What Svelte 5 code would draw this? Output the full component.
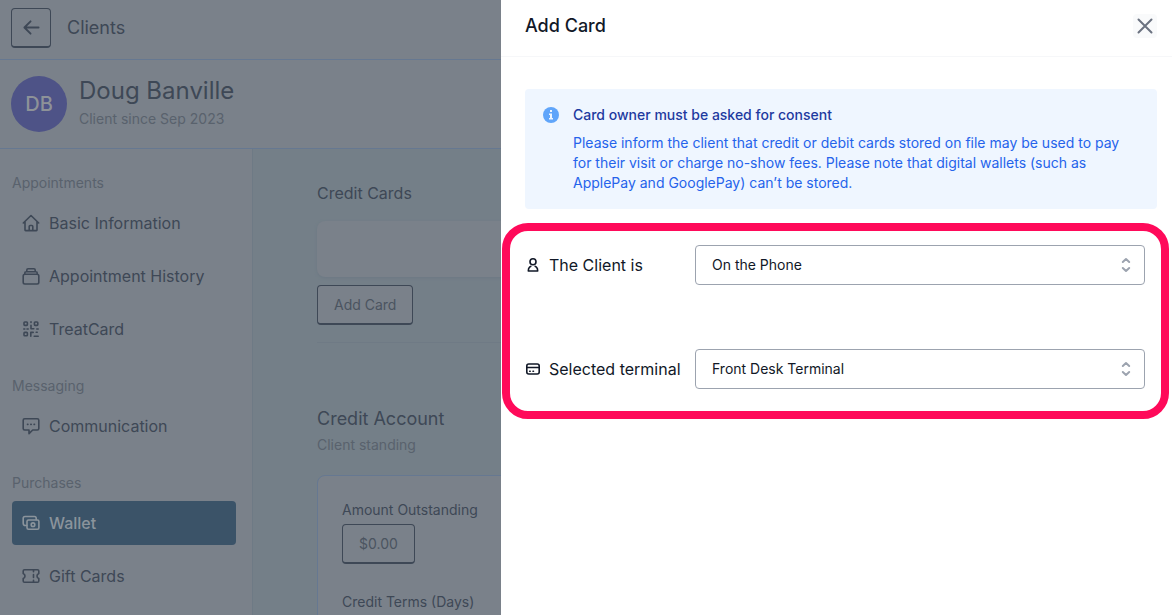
<script>
  const groups = [
    {
      title: 'Appointments',
      items: [
        { label: 'Basic Information', icon: 'home' },
        { label: 'Appointment History', icon: 'stack' },
        { label: 'TreatCard', icon: 'qr' },
      ],
    },
    { title: 'Messaging', items: [{ label: 'Communication', icon: 'message' }] },
    {
      title: 'Purchases',
      items: [
        { label: 'Wallet', icon: 'cash', active: true },
        { label: 'Gift Cards', icon: 'ticket' },
      ],
    },
  ];
  let place = $state('On the Phone');
  let terminal = $state('Front Desk Terminal');
</script>

{#snippet chevrons()}
  <svg class="chevrons" viewBox="0 0 20 20" aria-hidden="true">
    <path d="M6.800 7 10 4l3.200 3M6.800 13 10 16l3.200-3" />
  </svg>
{/snippet}

{#snippet icon(name)}
  <svg class="icon" viewBox="0 0 18 18" aria-hidden="true">
    {#if name === 'home'}
      <path d="M1.300 9 9 1.500 16.700 9M3 7.600V16q0 .6.600.6h10.800q.6 0 .6-.6V7.600M7.200 16.400v-4q0-.9.900-.9h1.800q.9 0 .9.900v4" />
    {:else if name === 'stack'}
      <rect x="1.200" y="7.200" width="15.600" height="9.800" rx="1.700" />
      <path d="M2.800 7V5.900q0-1.200 1.200-1.200h10q1.200 0 1.200 1.200V7M4.800 4.600V3q0-1.300 1.300-1.300h5.800q1.300 0 1.300 1.300v1.600" />
    {:else if name === 'qr'}
      <rect x="2" y="2" width="3.400" height="3.400" rx=".8" />
      <rect x="12.400" y="2" width="3.400" height="3.400" rx=".8" />
      <rect x="2" y="12.400" width="3.400" height="3.400" rx=".8" />
      <path d="M9 1.800v.6M9 5.200v3.600h2.800M1.800 9h1M5 9h1.200M14.800 9h1.400M8.800 16.200v-3.800h2.400M14.200 12.200h1M12.200 16.200h4" />
    {:else if name === 'message'}
      <path d="M2.700 1.700h12.600q1.500 0 1.500 1.500v8.300q0 1.500-1.500 1.500h-4.600L7 16.600V13H2.700q-1.500 0-1.500-1.500V3.200q0-1.500 1.500-1.500Z" />
      <path d="M5.500 7.400h.4M8.800 7.400h.4M12.100 7.400h.4" />
    {:else if name === 'cash'}
      <rect x="5" y="6" width="11.900" height="9.300" rx="1.500" />
      <circle cx="11" cy="10.700" r="1.800" />
      <path d="M4.800 11.500H3.500q-2.300 0-2.300-2.300V4.300q0-1.800 1.800-1.800h9.500q1.700 0 1.700 1.700v1.500" />
    {:else}
      <path d="M2.500 2.800h13q1.300 0 1.300 1.300v2.300q-1.800.7-1.800 2.600t1.800 2.600v2.300q0 1.300-1.300 1.300h-13q-1.300 0-1.300-1.300v-2.300Q3 10.900 3 9T1.200 6.400V4.100q0-1.300 1.300-1.300Z" />
      <path d="M11.500 3v1.700M11.500 7.600v2.800M11.500 13.300V15" />
    {/if}
  </svg>
{/snippet}

<div class="page">
  <header class="topbar">
    <button class="btn back" aria-label="Back">
      <svg viewBox="0 0 18 18" aria-hidden="true"><path d="M16.500 9H2M8 2.500 1.500 9 8 15.500" /></svg>
    </button>
    <span>Clients</span>
  </header>

  <section class="client">
    <div class="avatar">DB</div>
    <div class="who">
      <h1>Doug Banville</h1>
      <p>Client since Sep 2023</p>
    </div>
  </section>

  <div class="columns">
    <nav>
      {#each groups as group}
        <section class="group">
          <h2>{group.title}</h2>
          <ul>
            {#each group.items as item}
              <li>
                <a href="#{item.icon}" class:active={item.active}>
                  {@render icon(item.icon)}
                  {item.label}
                </a>
              </li>
            {/each}
          </ul>
        </section>
      {/each}
    </nav>

    <main>
      <h3>Credit Cards</h3>
      <div class="empty"></div>
      <button class="btn">Add Card</button>
      <hr />
      <h2>Credit Account</h2>
      <p class="hint">Client standing</p>
      <div class="account">
        <p>Amount Outstanding</p>
        <button class="btn">$0.00</button>
        <p class="terms">Credit Terms (Days)</p>
      </div>
    </main>
  </div>
</div>

<aside class="drawer" role="dialog" aria-labelledby="drawer-title">
  <header>
    <h2 id="drawer-title">Add Card</h2>
    <button class="close" aria-label="Close">
      <svg viewBox="0 0 24 24" aria-hidden="true"><path d="M5.500 5.500 18.500 18.500M18.500 5.500 5.500 18.500" /></svg>
    </button>
  </header>

  <div class="notice">
    <svg viewBox="0 0 20 20" aria-hidden="true">
      <circle cx="10" cy="10" r="8" fill="#60a5fa" />
      <path d="M9 5h2v2H9zM8 8.500h3V13h1v1.500H8V13h1v-3H8z" fill="#eff6ff" />
    </svg>
    <div>
      <h3>Card owner must be asked for consent</h3>
      <p>
        Please inform the client that credit or debit cards stored on file may be used to pay for
        their visit or charge no-show fees. Please note that digital wallets (such as ApplePay and
        GooglePay) can’t be stored.
      </p>
    </div>
  </div>

  <form>
    <div class="field">
      <label for="place">
        <svg viewBox="0 0 14 16" aria-hidden="true">
          <circle cx="7" cy="4.700" r="3" />
          <path d="M4.800 9.300 3.600 10.200Q2.300 11.300 2.300 14h9.400q0-2.700-1.300-3.800L9.200 9.300" />
        </svg>
        The Client is
      </label>
      <div class="select">
        <select id="place" bind:value={place}>
          <option>On the Phone</option>
        </select>
        {@render chevrons()}
      </div>
    </div>
    <div class="field">
      <label for="terminal">
        <svg viewBox="0 0 14 16" aria-hidden="true">
          <rect x=".8" y="3" width="12.400" height="10" rx="2" />
          <path d="M1 6.500h12M3.700 10.300h.5M7 10.300h.5" />
        </svg>
        Selected terminal
      </label>
      <div class="select">
        <select id="terminal" bind:value={terminal}>
          <option>Front Desk Terminal</option>
        </select>
        {@render chevrons()}
      </div>
    </div>
  </form>
</aside>

<style>
  :global(body) {
    margin: 0;
    overflow: hidden;
    font-family: Inter, 'Liberation Sans', sans-serif;
    font-size: 14px;
    line-height: 20px;
  }
  * {
    box-sizing: border-box;
  }
  h1, h2, h3, p, ul {
    margin: 0;
    padding: 0;
    font-weight: 400;
  }
  ul {
    list-style: none;
  }
  svg {
    flex: none;
    fill: none;
    stroke: currentColor;
    stroke-width: 1.600;
    stroke-linecap: round;
    stroke-linejoin: round;
  }
  button, select {
    font: inherit;
    color: inherit;
  }

  .page {
    display: flex;
    flex-direction: column;
    height: 100vh;
    overflow: hidden;
    background: #7a818a;
    color: #3e4856;
  }
  .topbar {
    flex: none;
    display: flex;
    align-items: center;
    gap: 16px;
    height: 60px;
    padding: 0 11px 4px;
    border-bottom: 1px solid #667891;
    font-size: 18px;
    line-height: 28px;
  }
  .btn {
    height: 40px;
    padding: 0 16px;
    border: 1px solid #3e4856;
    border-bottom-width: 2px;
    border-radius: 4px;
    background: #7a818a;
    color: #4b5460;
  }
  .back {
    display: grid;
    place-items: center;
    width: 40px;
    padding: 0;
    color: #3e4856;
  }
  .back svg {
    width: 17px;
    height: 17px;
    stroke-width: 2;
  }
  .client {
    flex: none;
    display: flex;
    align-items: center;
    gap: 12px;
    height: 89px;
    padding: 0 11px;
    border-bottom: 1px solid #667891;
  }
  .avatar {
    display: grid;
    place-items: center;
    width: 56px;
    height: 56px;
    border-radius: 50%;
    background: #4e5387;
    color: #8d9298;
    font-size: 20px;
    font-weight: 500;
  }
  .who {
    padding-bottom: 4px;
  }
  h1 {
    font-size: 24px;
    line-height: 32px;
    margin-bottom: 2px;
  }
  .client p, .group h2, .hint {
    color: #59626d;
    font-size: 14px;
  }
  .columns {
    flex: 1;
    display: flex;
    min-height: 0;
  }
  nav {
    flex: none;
    display: flex;
    flex-direction: column;
    gap: 25px;
    width: 253px;
    padding: 24px 16px 24px 12px;
    border-right: 1px solid #6e7a85;
  }
  .group {
    display: flex;
    flex-direction: column;
    gap: 8px;
  }
  .group ul {
    display: flex;
    flex-direction: column;
    gap: 9px;
  }
  nav a {
    display: flex;
    align-items: center;
    gap: 9px;
    height: 44px;
    padding: 0 10px;
    border-radius: 4px;
    color: #3e4856;
    font-size: 16px;
    text-decoration: none;
  }
  nav .active {
    background: #3b5368;
    color: #8b949c;
    font-weight: 500;
  }
  .icon {
    width: 18px;
    height: 18px;
  }
  main {
    flex: 1;
    padding: 32px 64px;
    background: #747f88;
  }
  main h3 {
    font-size: 16px;
    line-height: 24px;
  }
  .empty {
    height: 56px;
    margin: 16px 0 8px;
    border-radius: 8px;
    background: #7a818a;
    box-shadow: 0 1px 3px #6c7884;
  }
  hr {
    margin: 17px 0 64px;
    border: 0;
    border-top: 1px solid #6f7a85;
  }
  main h2 {
    font-size: 18px;
    line-height: 24px;
    margin-bottom: 4px;
  }
  .account {
    margin-top: 20px;
    padding: 24px;
    border: 1px solid #667891;
    border-radius: 8px;
    background: #7a818a;
  }
  .account .btn {
    margin: 4px 0 28px;
  }

  .drawer {
    position: fixed;
    inset: 0 0 0 auto;
    width: min(100%, 671px);
    background: #fff;
    color: #111827;
    overflow: auto;
  }
  .drawer header {
    display: flex;
    align-items: center;
    justify-content: space-between;
    height: 57px;
    padding: 0 15px 4px 24px;
    border-bottom: 1px solid #f6f7f9;
  }
  .drawer h2 {
    font-size: 18px;
    line-height: 28px;
    font-weight: 500;
  }
  .close {
    width: 24px;
    height: 24px;
    padding: 0;
    border: 0;
    border-radius: 4px;
    background: #f9fafb;
    color: #6b7280;
  }
  .close svg {
    display: block;
    stroke-width: 2;
  }
  .notice {
    display: flex;
    gap: 12px;
    margin: 32px 15px 14px 24px;
    padding: 16px;
    border-radius: 4px;
    background: #eff6ff;
    color: #2563eb;
  }
  .notice svg {
    width: 20px;
    height: 20px;
    stroke: none;
  }
  .notice h3 {
    margin-bottom: 8px;
    color: #1e3a9f;
    font-size: 14px;
    font-weight: 500;
  }
  form {
    display: flex;
    flex-direction: column;
    gap: 64px;
    margin: 0 3px 0 1px;
    padding: 14px 16px 22px;
    border: 8px solid #ff0a5a;
    border-radius: 26px;
  }
  .field {
    display: grid;
    grid-template-columns: 169px 1fr;
    align-items: center;
  }
  label {
    display: flex;
    align-items: center;
    gap: 9px;
    font-size: 16px;
    white-space: nowrap;
  }
  label svg {
    width: 14px;
    height: 16px;
  }
  .select {
    display: grid;
    align-items: center;
  }
  .select > :global(*) {
    grid-area: 1 / 1;
  }
  select {
    appearance: none;
    width: 100%;
    height: 40px;
    padding: 0 40px 0 16px;
    border: 1px solid #9ca3af;
    border-radius: 4px;
    background: #fff;
  }
  .chevrons {
    justify-self: end;
    width: 20px;
    height: 20px;
    margin-right: 9px;
    color: #9ca3af;
    stroke-width: 2;
    pointer-events: none;
  }
</style>
